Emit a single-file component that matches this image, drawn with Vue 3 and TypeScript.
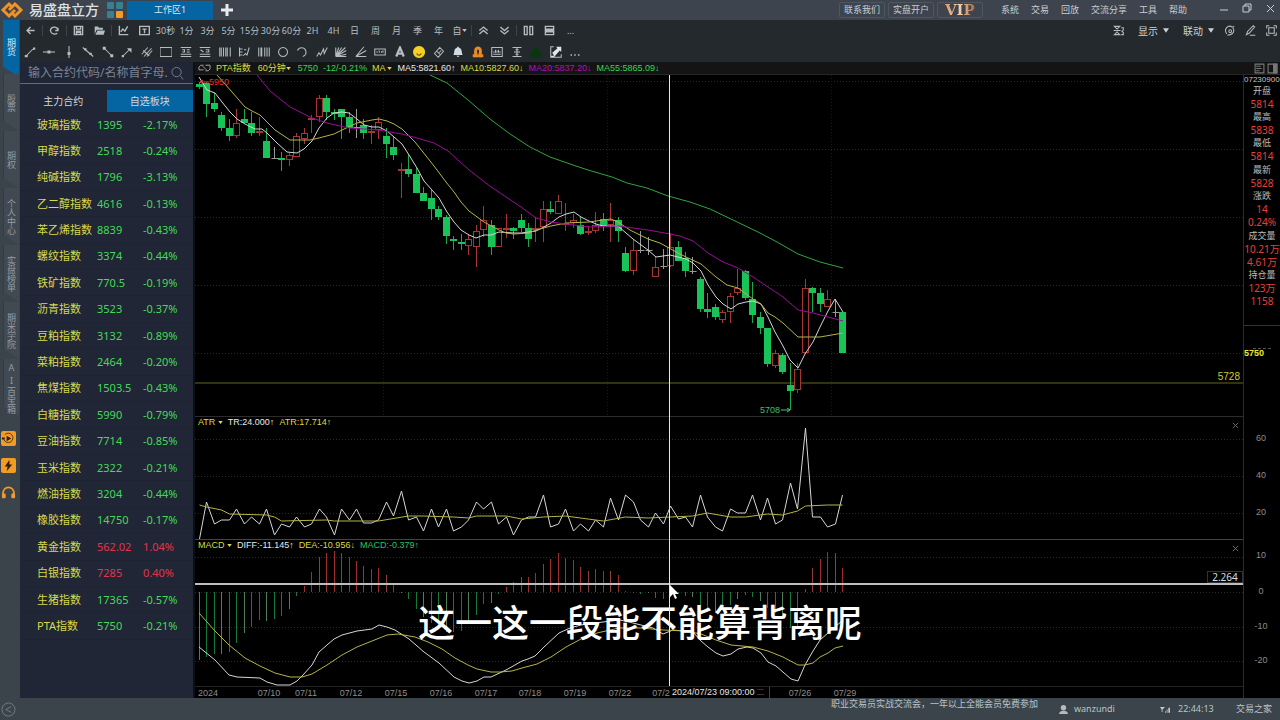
<script setup lang="ts">
import { ref } from 'vue'

type Kind = 'g' | 'r' | 'w'
interface Candle { kind: Kind; x: number; top: number; bottom: number; high: number; low: number }
interface Icon { name: string; d: string; fill?: string; tone?: string }
type Point = [number, number]

const STEP = 7.477
const slot = (i: number): number => Math.round(4 + STEP * i) + 0.5

/* candles: kind, body top, body bottom, wick top, wick bottom (three units to a pixel) */
const candleData = `g 72 80 66 88,g 70 131 66 170,g 130 147 98 155,g 164 203 155 212,g 204 228 178 243,r 188 228 147 235,g 178 188 148 190,g 188 219 155 228,r 213 218 172 228,g 244 293 203 293,w 294 294 262 294,g 294 300 277 333,r 286 300 278 318,r 229 292 220 292,r 220 236 204 252,r 173 179 165 219,r 115 170 106 185,g 115 155 105 180,g 156 163 148 180,g 147 170 147 236,g 171 204 155 220,w 200 200 147 235,g 196 219 178 236,r 212 218 195 252,r 187 210 172 236,g 228 251 204 293,g 262 285 228 300,r 327 332 310 415,g 327 342 285 350,g 342 398 325 398,g 399 422 380 422,g 415 446 390 479,g 447 470 438 480,g 472 527 465 552,g 537 544 528 570,g 546 553 522 570,r 536 559 522 586,r 512 560 495 620,r 481 511 438 530,g 495 560 480 586,r 505 560 505 560,r 504 510 462 535,g 505 512 500 537,g 480 503 462 515,g 504 536 490 562,r 504 510 472 545,r 448 500 424 545,g 447 455 422 462,r 424 462 405 463,r 490 496 430 513,r 480 488 462 505,g 495 522 472 526,r 513 518 498 526,r 495 512 455 520,g 477 498 460 512,r 480 495 430 546,g 480 512 470 545,g 579 632 560 635,r 570 632 538 644,w 570 570 513 580,w 570 570 530 586,r 620 652 587 652,w 619 619 568 628,r 560 618 520 620,g 561 602 542 602,g 594 632 577 650,w 634 634 592 643,g 658 748 652 755,g 748 755 699 773,g 741 772 732 780,r 757 781 750 788,r 709 755 700 788,r 685 699 627 706,g 633 714 630 720,g 717 764 667 788,g 772 805 757 822,g 805 911 803 920,r 878 917 870 925,g 885 936 880 943,g 975 992 910 1050,r 926 991 910 1000,r 685 879 658 882,g 684 699 682 757,g 699 731 684 755,r 717 740 690 742,w 757 757 720 772,g 757 879 755 880`
const priceY = (v: number): number => Math.round(v / 3) - 15
const candles: Candle[] = candleData.split(',').map((row, i) => {
  const [kind, ...n] = row.split(' ')
  const [top, bottom, high, low] = n.map(Number).map(priceY)
  return { kind: kind as Kind, x: slot(i), top, bottom, high, low }
})

const line = (src: string, ox: number, oy: number): string =>
  src.split(' ').map(p => p.split(',').map(Number) as Point).map(([x, y]) => `${x - ox},${y - oy}`).join(' ')

const averages = [
  { cls: 'ma5', pts: line('199,77 207,90 215,93 222,102 230,112 237,119 245,124 255,129 262,129 267,133 277,143 287,152 297,153 304,149 312,141 319,128 327,118 334,113 342,112 349,113 357,119 364,125 372,127 379,127 387,131 394,137 402,144 409,155 417,168 424,181 432,190 439,198 447,212 454,222 461,230 469,235 476,238 484,235 491,235 499,232 514,233 521,233 529,232 536,231 544,227 551,223 559,217 566,214 574,212 581,217 589,221 596,224 603,226 618,226 626,233 633,239 648,250 656,257 663,256 670,255 678,257 686,259 693,263 701,271 708,285 716,297 723,304 731,309 738,304 746,302 753,301 761,304 768,317 775,332 783,346 790,360 798,368 805,354 813,342 820,327 828,311 835,299 843,312', 195, 75) },
  { cls: 'ma10', pts: line('217,75 232,92 245,107 252,111 260,115 275,130 290,140 310,140 319,138 334,134 342,130 357,123 372,120 379,119 387,121 394,124 402,129 415,142 434,166 446,182 454,192 461,202 469,211 484,222 499,230 506,233 514,234 529,233 536,230 551,226 566,223 589,222 603,220 611,219 618,222 630,230 648,239 660,243 678,253 686,257 701,264 716,277 727,285 738,288 753,299 761,304 768,313 775,317 783,323 798,337 820,337 843,333', 195, 75) },
  { cls: 'ma20', pts: line('257,75 270,91 290,107 312,118 327,123 349,128 379,130 402,134 417,138 434,143 448,151 469,170 491,187 506,197 521,207 536,218 551,222 566,224 589,227 618,226 633,228 648,230 670,234 680,236 693,241 708,253 723,262 738,268 753,277 768,287 783,297 798,310 813,313 828,317 843,321', 195, 75) },
  { cls: 'ma55', pts: line('430,75 447,83 468,100 490,119 510,134 530,147 550,157 570,164 588,170 612,177 627,183 647,188 668,196 690,202 710,209 733,220 760,233 777,242 798,254 820,262 843,268', 195, 75) },
]

const series = (src: string, oy: number): string =>
  src.split(' ').map((v, i) => `${slot(i)},${Math.round(Number(v) / 3) + 410 - oy}`).join(' ')
const trueRange = series('387 275 341 329 329 298 341 320 341 298 374 341 352 320 352 342 298 320 374 298 329 298 340 340 330 276 319 242 330 320 363 298 352 298 363 352 330 275 297 275 341 320 374 329 320 320 254 352 342 298 364 342 364 330 352 265 330 254 275 330 352 309 341 288 328 320 352 254 320 352 364 298 308 308 254 330 265 341 330 220 297 54 320 320 352 342 254', 417)
const atr = '0,286 1,290 3,299 4,313 9,315 10,321 11,333 17,329 18,334 24,332 28,317 30,319 34,321 36,323 37,318 41,318 43,326 46,320 49,318 53,329 54,332 57,320 60,325 66,318 68,310 71,320 73,322 76,312 78,314 80,302 81,289 84,286 86,286'
  .split(' ').map(p => p.split(',').map(Number)).map(([i, v]) => `${slot(i)},${Math.round(v / 3) - 7}`).join(' ')

const ZERO = 52
const bars = '749 740 731 731 726 698 669 651 630 633 627 617 597 557 528 487 442 429 424 429 442 453 468 477 474 496 523 548 567 597 620 640 655 665 665 662 640 615 581 578 553 531 516 502 502 489 462 447 430 444 450 471 483 478 483 483 494 542 549 552 549 563 566 560 550 557 560 585 598 605 600 585 568 555 560 573 595 610 620 655 655 537 475 447 426 429 474'
  .split(' ').map((v, i) => ({ x: slot(i), y: Math.round(Number(v) / 3) - 130, tone: i % 3 }))

const thirds = (src: string): string =>
  src.split(' ').map(p => p.split(',').map(Number)).map(([x, y]) => `${Math.round(x / 3)},${Math.round(y / 3) - 130}`).join(' ')
const diff = thirds('13,712 60,750 103,795 127,800 195,805 217,817 245,826 285,826 305,812 325,795 350,765 373,725 395,705 418,687 440,675 485,662 530,656 553,645 575,650 600,660 643,688 687,725 732,760 777,802 800,814 822,819 845,812 867,800 889,802 934,780 980,752 1000,748 1020,738 1046,710 1091,668 1125,655 1159,645 1225,635 1275,630 1315,640 1375,655 1405,672 1435,660 1495,665 1517,693 1540,712 1562,728 1585,737 1607,732 1630,718 1655,711 1675,715 1697,728 1720,757 1742,767 1787,807 1810,812 1831,765 1853,722 1876,690 1898,668 1943,630')
const dea = thirds('13,610 60,662 103,705 150,745 195,768 240,788 285,800 320,800 350,792 395,766 440,735 485,710 530,692 575,676 610,671 660,680 700,697 740,717 780,743 820,766 845,778 889,785 915,787 950,783 980,775 1025,762 1068,740 1114,710 1159,688 1205,668 1271,655 1338,655 1405,660 1472,662 1517,672 1562,690 1607,706 1675,710 1720,722 1765,742 1810,766 1831,766 1853,758 1876,742 1898,728 1921,715 1943,707')

const dates = [['07/10', 74], ['07/11', 111], ['07/12', 156], ['07/15', 201], ['07/16', 246], ['07/17', 291], ['07/18', 335], ['07/19', 380], ['07/22', 425], ['07/2', 466], ['07/26', 605], ['07/29', 650]] as const
const scale = [['60', 112], ['40', 149], ['20', 186], ['10', 229], ['0', 265], ['-10', 300], ['-20', 334]] as const

const quotes: [string, boolean][] = [['开盘', false], ['5814', true], ['最高', false], ['5838', true], ['最低', false], ['5814', true], ['最新', false], ['5828', true], ['涨跌', false], ['14', true], ['0.24%', true], ['成交量', false], ['10.21万', true], ['4.61万', true], ['持仓量', false], ['123万', true], ['1158', true]]

const watch = ['玻璃指数 1395 -2.17%', '甲醇指数 2518 -0.24%', '纯碱指数 1796 -3.13%', '乙二醇指数 4616 -0.13%', '苯乙烯指数 8839 -0.43%', '螺纹指数 3374 -0.44%', '铁矿指数 770.5 -0.19%', '沥青指数 3523 -0.37%', '豆粕指数 3132 -0.89%', '菜粕指数 2464 -0.20%', '焦煤指数 1503.5 -0.43%', '白糖指数 5990 -0.79%', '豆油指数 7714 -0.85%', '玉米指数 2322 -0.21%', '燃油指数 3204 -0.44%', '橡胶指数 14750 -0.17%', '黄金指数 562.02 1.04%', '白银指数 7285 0.40%', '生猪指数 17365 -0.57%', 'PTA指数 5750 -0.21%'].map(s => s.split(' '))

const railTabs = ['期货', '股票', '期权', '个人中心', '实盘榜单', '期米学院', 'AI百宝箱']
const periods = ['30秒', '1分', '3分', '5分', '15分', '30分', '60分', '2H', '4H', '日', '周', '月', '季', '年', '自']
const menus = ['系统', '交易', '回放', '交流分享', '工具', '帮助']

const tools: Icon[] = [
  { name: '线段', d: 'M3 13L12 4', fill: 'M1 12h4v3H1zM12 2h3v3h-3z' },
  { name: '水平线', d: 'M0 8h16', fill: 'M6 6h4v4H6z' },
  { name: '垂直线', d: 'M8 0v16', fill: 'M6 8h4v4H6z' },
  { name: '直线', d: 'M1 2L15 14', fill: 'M3 3l3 0 0 3-3 0zM10 9h3v3h-3z' },
  { name: '下行线', d: 'M3 3L13 13', fill: 'M1 1h4v4H1zM11 11h4v4h-4z' },
  { name: '箭头线', d: 'M3 13L12 4', fill: 'M1 12h3v3H1zM8 3h6v6z' },
  { name: '平行线', d: 'M1 11L9 2M4 14L14 3M8 14l7-8M3 6l8 7' },
  { name: '矩形', d: 'M0 2h16v12H0z' },
  { name: '黄金分割', d: 'M1 2h14M1 14h14M1 11h14M3 5h3v3H3M9 5h4M9 8h4' },
  { name: '百分比线', d: 'M1 2h14M1 14h14M1 11h14M2 5l4 3M9 5h4v3H9' },
  { name: '周期线', d: 'M1 2v12M3 2v12M6 2v12M9 2v12M11 2v12M15 2v12' },
  { name: '波浪尺', d: 'M2 2v12M2 4h4M2 8h4M2 12h4M7 13l3-3 2 2 3-10M8 5h3' },
  { name: '时间尺', d: 'M1 2v12M4 2v12M5 2v12M9 2v12M12 2v12M15 2v12' },
  { name: '圆', d: 'M8 2a6 6 0 1 0 .1 0z' },
  { name: '弧线', d: 'M2 6c2-5 9-5 11 0 1 4-1 7-4 8' },
  { name: '折线', d: 'M1 14l3-5 2 3 4-8 1 6 4-8' },
  { name: '江恩线', d: 'M1 14V2M1 14L5 2M1 14L9 2M1 14L14 2M1 14L15 6M1 14l14-3M1 14h14' },
  { name: '扇形线', d: 'M1 14L12 1M1 14l14-8M1 14h14' },
  { name: '测量', d: 'M1 4h14v8H1zM4 9V7M7 9V6M10 9V7M12 9V6' },
  { name: '文字', d: 'M3 14L8 2l5 12M5 10h6', tone: 'bold' },
  { name: '表情', d: 'M5 10c1 3 5 3 6 0', fill: 'M8 0a8 8 0 1 0 .1 0zM5 5v2h1V5zM10 5v2h1V5z', tone: 'smile' },
  { name: '橡皮', d: 'M2 10L9 2l5 5-7 8zM5 7l5 5M8 9l3-3' },
  { name: '提醒', d: '', fill: 'M7 1h2v1c3 1 4 3 4 6l1 4H2l1-4c0-3 1-5 4-6zM6 13h4l-2 2z', tone: 'bell' },
  { name: '磁吸', d: 'M4 13h2c-6-14 10-14 4 0h2', fill: 'M1 11h5v4H1zM10 11h5v4h-5z', tone: 'magnet' },
  { name: '统计', d: 'M1 2h14v12H1zM3 11h10M4 9V7M6 9V5M8 9V6M10 9V5M12 9V7' },
  { name: '间距', d: 'M2 2h12M2 14h12M8 2v12M4 8h8M6 5h4M6 11h4' },
  { name: '云图', d: '', fill: 'M8 1a4 4 0 0 1 3 6 4 4 0 1 1-3 6 4 4 0 1 1-3-6 4 4 0 0 1 3-6z', tone: 'leaf' },
  { name: '全屏', d: 'M5 1H1v14h14v-4', fill: 'M8 1h7v7l-2-2-7 8-3-5 7-6zM1 13h5v2H1z', tone: 'white' },
  { name: '更多', d: '', fill: 'M2 11h2v2H2zM7 11h2v2H7zM12 11h2v2h-2z' },
]

const icons = {
  back: 'M8 3L3 8l5 5M3 8h11',
  redo: 'M13 4v4H9M13 8c-1-7-10-6-11 0 1 6 7 6 10 4',
  save: 'M2 2h12v12H2zM5 2v4h6V2M5 14V9h6v5M6 11h4',
  trend: 'M2 1v13h13M4 10l3-4 3 3 4-7',
  text: 'M1 2h14v12H1zM5 6h6M8 6v6',
  up: 'M2 8l6-5 6 5M2 13l6-5 6 5',
  down: 'M2 3l6 5 6-5M2 8l6 5 6-5',
  cols: 'M2 2h4v12H2zM10 2h4v12h-4z',
  rows: 'M2 2h12v4H2zM1 8h14M2 10h12v4H2z',
}
const query = ref('')
const activeRail = ref(0)
const activeList = ref(1)
</script>

<template>
  <div class="app">
    <header class="titlebar">
      <svg class="brand" viewBox="0 0 24 18"><path d="M12 6L9 3 3 9l6 6 6-6" /><path d="M12 12l3 3 6-6-6-6-6 6" /></svg>
      <strong class="name">易盛盘立方</strong>
      <svg class="tiles" viewBox="0 0 16 16"><rect width="7" height="7" rx="1" fill="#397f93" /><rect x="9" width="7" height="7" rx="1" fill="#397f93" /><rect y="9" width="7" height="7" rx="1" fill="#397f93" /><rect x="9" y="9" width="7" height="7" rx="1" fill="#f19b2b" /></svg>
      <button class="workspace">工作区1</button>
      <button class="plus" aria-label="新建工作区"><svg viewBox="0 0 12 12"><path d="M6 0v12M0 6h12" /></svg></button>
      <div class="promo">
        <button>联系我们</button><button>实盘开户</button><button class="vip"><span>VIP</span></button>
      </div>
      <nav class="menus"><a v-for="m in menus" :key="m" href="#">{{ m }}</a></nav>
      <div class="window">
        <button aria-label="最小化"><svg viewBox="0 0 10 10"><path d="M1 7h8" /></svg></button>
        <button aria-label="还原"><svg viewBox="0 0 10 10"><path d="M1 3h6v6H1zM3 3V1h6v6H7" /></svg></button>
        <button aria-label="关闭"><svg viewBox="0 0 10 10"><path d="M2 2l7 7M9 2L2 9" /></svg></button>
      </div>
    </header>

    <div class="body">
      <aside class="rail">
        <button v-for="(t, i) in railTabs" :key="t" :class="['rail-tab', { on: activeRail === i }]" @click="activeRail = i"><span>{{ t }}</span></button>
        <div class="rail-tools">
          <button class="tile" aria-label="直播"><svg viewBox="0 0 16 16"><path d="M3 9a5 5 0 1 0 1-5" fill="none" stroke="#493312" /><path d="M6 5l5 3-5 3zM1 7h3v2H1z" /></svg></button>
          <button class="tile" aria-label="快讯"><svg viewBox="0 0 16 16"><path d="M9 2L4 9h3l-1 5 6-7H9z" /></svg></button>
          <button class="phones" aria-label="客服"><svg viewBox="0 0 16 16"><path d="M2 10c0-10 12-10 12 0" fill="none" stroke="#f19b2b" stroke-width="2" /><rect x="1" y="9" width="4" height="5" rx="1" /><rect x="11" y="9" width="4" height="5" rx="1" /></svg></button>
        </div>
      </aside>

      <main class="main">
        <div class="bar">
          <button aria-label="返回"><svg class="ic" viewBox="0 0 16 16"><path :d="icons.back" /></svg></button><i />
          <button aria-label="刷新"><svg class="ic" viewBox="0 0 16 16"><path :d="icons.redo" /></svg></button><i />
          <button aria-label="保存"><svg class="ic" viewBox="0 0 16 16"><path :d="icons.save" /></svg></button>
          <button aria-label="打开"><svg class="ic" viewBox="0 0 16 16"><path class="solid" d="M1 2h5l1 2h6v3H4l-3 6zM5 8h11l-2 6H2z" /></svg></button><i />
          <button aria-label="走势"><svg class="ic" viewBox="0 0 16 16"><path :d="icons.trend" /></svg></button>
          <button aria-label="文本"><svg class="ic" viewBox="0 0 16 16"><path :d="icons.text" /></svg></button>
          <button v-for="p in periods" :key="p">{{ p }}<svg v-if="p === '自'" class="caret" viewBox="0 0 6 4"><path d="M0 0h6L3 4z" /></svg></button><i />
          <button aria-label="放大"><svg class="ic" viewBox="0 0 16 16"><path :d="icons.up" /></svg></button>
          <button aria-label="缩小"><svg class="ic" viewBox="0 0 16 16"><path :d="icons.down" /></svg></button><i />
          <button aria-label="竖排"><svg class="ic" viewBox="0 0 16 16"><path :d="icons.cols" /></svg></button>
          <button aria-label="横排"><svg class="ic" viewBox="0 0 16 16"><path :d="icons.rows" /></svg></button>
          <button>...</button>
          <div class="bar-right">
            <button aria-label="翻转"><svg class="ic" viewBox="0 0 16 16"><path d="M1 8h10M2 2l4 4 4-4zM6 10l-4 4h8zM12 4h3v3l-2 2 2 2v3h-3" /></svg></button>
            <button class="pick">显示<svg viewBox="0 0 8 6"><path d="M0 0h8L4 6z" /></svg></button>
            <button class="pick">联动<svg viewBox="0 0 8 6"><path d="M0 0h8L4 6z" /></svg></button>
            <button aria-label="同步"><svg class="ic" viewBox="0 0 16 16"><path d="M4 13C-1 6 6-1 12 3l3-1M13 4c3 5 0 9-4 10l-4 1" /><circle cx="9" cy="9" r="2" /></svg></button>
            <button aria-label="编辑"><svg class="ic" viewBox="0 0 16 16"><path d="M2 14l2-5 8-8 2 2-8 9zM7 15h8" /></svg></button>
            <button aria-label="全屏"><svg class="ic" viewBox="0 0 16 16"><path d="M1 5V1h4M11 1h4v4M15 11v4h-4M5 15H1v-4M4 4h8v8H4z" /></svg></button>
          </div>
        </div>
        <div class="tools">
          <button v-for="t in tools" :key="t.name" :aria-label="t.name"><svg :class="['ic', t.tone]" viewBox="0 0 16 16"><path v-if="t.fill" class="solid" :d="t.fill" /><path v-if="t.d" :d="t.d" /></svg></button>
        </div>

        <div class="content">
          <section class="watch">
            <label class="search">
              <input v-model="query" type="text" aria-label="搜索合约" placeholder="输入合约代码/名称首字母." />
              <svg viewBox="0 0 14 14"><circle cx="6" cy="6" r="5" /><path d="M10 10l3 4" /></svg>
            </label>
            <div class="tabs">
              <button v-for="(t, i) in ['主力合约', '自选板块']" :key="t" :class="{ on: activeList === i }" @click="activeList = i">{{ t }}</button>
            </div>
            <table>
              <tbody>
                <tr v-for="w in watch" :key="w[0]" :class="{ rise: !w[2].startsWith('-') }"><td>{{ w[0] }}</td><td>{{ w[1] }}</td><td>{{ w[2] }}</td></tr>
              </tbody>
            </table>
          </section>

          <section class="board">
            <div class="legend head">
              <svg class="link" viewBox="0 0 14 8"><path d="M6 6H1V3l2-2h3M8 1h5v4l-2 2H8M5 2l4 4" /></svg>
              <span class="y">PTA指数</span><span class="y period">60分钟<svg class="caret" viewBox="0 0 6 4"><path d="M0 0h6L3 4z" /></svg></span>
              <span class="gr">5750</span><span class="gr">-12/-0.21%</span>
              <span class="y">MA <svg class="caret" viewBox="0 0 6 4"><path d="M0 0h6L3 4z" /></svg></span>
              <span class="wh">MA5:5821.60↑</span><span class="y">MA10:5827.60↓</span><span class="pu">MA20:5837.20↓</span><span class="gr">MA55:5865.09↓</span>
              <div class="views">
                <button aria-label="列表"><svg viewBox="0 0 10 10"><path d="M1 1h8v8H1zM2 3h4M2 5h5M2 7h3" /></svg></button>
                <button aria-label="侧栏"><svg viewBox="0 0 10 10"><path d="M1 1h8v8H1z" /><path class="solid" d="M6 1h3v8H6z" /></svg></button>
              </div>
            </div>
            <div class="split">
              <div class="stage">
                <div class="pane price">
                  <svg class="plot">
                    <line v-for="y in [6, 74, 142, 210, 278]" :key="y" class="grid" x1="0" x2="100%" :y1="y + 0.5" :y2="y + 0.5" />
                    <line v-for="x in [188, 412, 636]" :key="x" class="grid faint" :x1="x + 0.5" :x2="x + 0.5" y1="0" y2="100%" />
                    <line class="level" x1="0" x2="100%" y1="308" y2="308" />
                    <g v-for="c in candles" :key="c.x" :class="['candle', c.kind]">
                      <template v-if="c.kind === 'r'">
                        <path :d="`M${c.x} ${c.high}V${c.top}M${c.x} ${c.bottom}V${c.low}`" />
                        <rect :x="c.x - 3" :y="c.top + 0.5" width="6" :height="Math.max(1, c.bottom - c.top - 1)" />
                      </template>
                      <template v-else>
                        <path :d="`M${c.x} ${c.high}V${c.low}`" />
                        <rect v-if="c.kind === 'g'" :x="c.x - 3.5" :y="c.top" width="7" :height="Math.max(2, c.bottom - c.top)" />
                        <path v-else :d="`M${c.x - 3} ${c.top + 0.5}h7`" />
                      </template>
                    </g>
                    <polyline v-for="a in averages" :key="a.cls" :class="['curve', a.cls]" :points="a.pts" />
                    <path class="hi" d="M14 7H5M8 5L5 7l3 2" /><text class="hi-t" x="14" y="10">5950</text>
                    <text class="lo-t" x="565" y="338">5708</text><path class="lo" d="M586 335h9M592 333l3 2-3 2" />
                    <text class="lv-t" x="100%" dx="-3" y="305">5728</text>
                  </svg>
                </div>
                <div class="pane atr">
                  <svg class="plot">
                    <line v-for="y in [22, 59, 96]" :key="y" class="grid" x1="0" x2="100%" :y1="y + 0.5" :y2="y + 0.5" />
                    <polyline class="curve ma5" :points="trueRange" /><polyline class="curve ma10" :points="atr" />
                  </svg>
                  <div class="legend over"><span class="y">ATR <svg class="caret" viewBox="0 0 6 4"><path d="M0 0h6L3 4z" /></svg></span><span class="wh">TR:24.000↑</span><span class="y">ATR:17.714↑</span></div>
                  <button class="close" aria-label="关闭ATR"><svg viewBox="0 0 8 8"><path d="M1 1l6 6M7 1L1 7" /></svg></button>
                </div>
                <div class="pane macd">
                  <svg class="plot">
                    <line v-for="y in [17, 52, 87, 121]" :key="y" class="grid" x1="0" x2="100%" :y1="y + 0.5" :y2="y + 0.5" />
                    <line v-for="b in bars" :key="b.x" :class="['bar-line', b.y < ZERO ? 'pos' : 'neg', 't' + b.tone]" :x1="b.x" :x2="b.x" :y1="ZERO" :y2="b.y" />
                    <polyline class="curve ma5" :points="diff" /><polyline class="curve ma10" :points="dea" />
                  </svg>
                  <div class="legend over"><span class="y">MACD <svg class="caret" viewBox="0 0 6 4"><path d="M0 0h6L3 4z" /></svg></span><span class="wh">DIFF:-11.145↑</span><span class="y">DEA:-10.956↓</span><span class="te">MACD:-0.379↑</span></div>
                  <button class="close" aria-label="关闭MACD"><svg viewBox="0 0 8 8"><path d="M1 1l6 6M7 1L1 7" /></svg></button>
                  <div class="cross-h"><span>2.264</span></div>
                  <p class="caption">这一这一段能不能算背离呢</p>
                </div>
                <div class="cross-v" />
                <svg class="cursor" viewBox="0 0 10 15"><path d="M1 0v12l3-3 2 5 2-1-2-4h4z" /></svg>
                <div class="axis">
                  <svg class="plot"><text x="3" y="9">2024</text><text v-for="d in dates" :key="d[0]" :x="d[1]" y="9" text-anchor="middle">{{ d[0] }}</text></svg>
                  <span class="stamp">2024/07/23 09:00:00<small>二</small></span>
                </div>
              </div>
              <aside class="quote">
                <div class="code">07230900</div>
                <div class="quote-list"><span v-for="(q, i) in quotes" :key="i" :class="{ red: q[1] }">{{ q[0] }}</span></div>
                <svg class="scale">
                  <line x1="9" x2="27" y1="22.5" y2="22.5" /><text class="now" x="0" y="30">5750</text>
                  <text v-for="s in scale" :key="s[0]" x="17" :y="s[1] + 3" text-anchor="middle">{{ s[0] }}</text>
                </svg>
              </aside>
            </div>
          </section>
        </div>
      </main>
    </div>

    <footer class="status">
      <button class="fold" aria-label="收起"><svg viewBox="0 0 16 16"><circle cx="8" cy="8" r="7" /><path d="M11 5L5 8l6 3" /></svg></button>
      <div class="news"><p>职业交易员实战交流会，一年以上全能会员免费参加</p></div>
      <svg class="user" viewBox="0 0 10 10"><circle cx="5" cy="3" r="3" /><path d="M0 10c0-5 10-5 10 0z" /></svg>
      <span class="login">wanzundi</span>
      <svg class="signal" viewBox="0 0 12 8"><path d="M0 1h6L3 4v3H2V4zM6 6h1v2H6zM8 4h1v4H8zM10 2h2v6h-2z" /></svg>
      <time>22:44:13</time>
      <a href="#">交易之家</a>
    </footer>
  </div>
</template>

<style>
body { background: #000; }
</style>

<style scoped>
.app { min-height: 100vh; display: flex; flex-direction: column; overflow: hidden; background: #000; color: #b9bfc4; font: 9px/12px "Noto Sans", "Noto Sans CJK SC", sans-serif; }
.app *, .app *::before { box-sizing: border-box; }
button { border: 0; padding: 0; margin: 0; background: none; color: inherit; font: inherit; display: flex; align-items: center; justify-content: center; white-space: nowrap; }
a { color: inherit; text-decoration: none; white-space: nowrap; }
svg { display: block; flex: none; fill: none; }
p { margin: 0; }

.titlebar { height: 20px; display: flex; align-items: center; background: #3d444d; color: #c9ced3; }
.brand { width: 24px; height: 18px; stroke: #ef9328; stroke-width: 3; }
.name { margin-left: 5px; width: 78px; color: #dde1e4; font-size: 14px; line-height: 20px; font-weight: 500; }
.tiles { width: 16px; height: 16px; }
.workspace { width: 86px; height: 19px; margin-left: 4px; background: #0565a2; color: #d9e7f2; }
.plus { width: 28px; height: 19px; }
.plus svg { width: 12px; height: 12px; stroke: #e8ebed; stroke-width: 3; }
.promo { margin-left: auto; display: flex; gap: 3px; }
.promo button { width: 46px; height: 16px; border: 1px solid #4d555e; border-radius: 2px; }
.promo .vip { font: bold 15px/14px "DejaVu Serif", serif; }
.vip span { background: linear-gradient(90deg, #d99a6c, #f3cfaa 50%, #a9683f); background-clip: text; -webkit-background-clip: text; color: transparent; }
.menus { display: flex; gap: 12px; margin-left: 18px; }
.window { display: flex; gap: 2px; margin-left: 26px; align-self: flex-start; }
.window button { width: 21px; height: 16px; }
.window svg { width: 10px; height: 10px; stroke: #c9ced3; stroke-width: 1; }

.body { flex: 1; display: flex; }
.rail { width: 20px; flex: none; background: #3b434b; color: #949ca3; }
.rail-tab { position: relative; width: 16px; height: 57px; margin-left: 3px; }
.rail-tab::before { content: ""; position: absolute; inset: 0; background: #414a52; border-left: 1px solid #343c43; clip-path: polygon(0 0, 100% 0, 100% 100%, 0 82%); }
.rail-tab.on { height: 54px; color: #dbe9f3; }
.rail-tab.on::before { background: #0565a2; border: 0; bottom: -3px; }
.rail-tab span { position: relative; writing-mode: vertical-rl; text-orientation: upright; font-size: 9px; line-height: 12px; }
.rail-tools { padding: 15px 0 0 1px; display: grid; gap: 12px; }
.rail-tools button { width: 15px; height: 15px; }
.rail-tools svg { width: 15px; height: 15px; fill: #2c2112; }
.tile { background: #f39c25; border-radius: 2px; }
.rail-tools .phones svg { fill: #f19b2b; }

.main { flex: 1; min-width: 0; display: flex; flex-direction: column; }
.bar { height: 21px; display: flex; align-items: center; background: #23292d; }
.bar > button { width: 21px; height: 20px; }
.bar > i { width: 1px; height: 11px; margin: 0 1px; background: #3d4449; }
.ic { width: 12px; height: 12px; stroke: #b6bcbf; stroke-width: 1.4; }
.bar .ic { width: 11px; height: 11px; stroke-width: 2; }
.ic .solid { fill: #b6bcbf; stroke: none; }
.caret { display: inline-block; width: 5px; height: 3px; fill: currentColor; vertical-align: middle; }
.bar-right { margin-left: auto; display: flex; align-items: center; gap: 10px; padding-right: 3px; }
.bar .bar-right .ic { stroke-width: 1.5; }
.pick { gap: 5px; margin-left: 4px; font-size: 10px; color: #c9d3d6; }
.pick svg { width: 6px; height: 5px; fill: #c9d3d6; }
.tools { height: 21px; display: grid; grid-template-columns: repeat(29, 1fr); padding-right: calc(100% - 565px); background: #23292d; }
.tools .bold { stroke-width: 3; }
.smile { stroke: #5b4b10; }
.smile .solid { fill: #f6cf25; }
.bell .solid { fill: #d0dce2; }
.tools .magnet { stroke: #e98b24; stroke-width: 4; }
.magnet .solid { fill: #e98b24; }
.leaf .solid { fill: #06370d; }
.white .solid { fill: #e4e8ea; }

.content { flex: 1; display: flex; background: #000; }
.watch { width: 175px; flex: none; background: #202635; border-right: 2px solid #0b0f18; }
.search { display: flex; align-items: center; height: 22px; border-bottom: 1px solid #656b76; padding: 0 9px 0 8px; }
.search input { flex: 1; min-width: 0; padding: 0; border: 0; outline: 0; background: none; color: #c0c6ce; font: 12px/18px "Noto Sans", "Noto Sans CJK SC", sans-serif; }
.search input::placeholder { color: #7c8390; opacity: 1; }
.search svg { width: 13px; height: 14px; stroke: #78808c; }
.tabs { display: grid; grid-template-columns: 1fr 1fr; padding-top: 6px; }
.tabs button { height: 22px; font-size: 10px; color: #d3d6db; }
.tabs .on { background: #0565a2; }
.watch table { width: 100%; height: 528px; border-collapse: collapse; color: #44da58; font-size: 11px; line-height: 14px; table-layout: fixed; }
.watch td { padding: 0; border-bottom: 1px solid #1d2331; white-space: nowrap; }
.watch td:nth-child(1) { width: 77px; padding-left: 17px; color: #d8d94e; }
.watch td:nth-child(2) { width: 46px; }
.rise td:nth-child(n + 2) { color: #e0354c; }

.board { flex: 1; min-width: 0; display: flex; flex-direction: column; font-family: "Liberation Sans", "Noto Sans CJK SC", sans-serif; }
.legend { display: flex; align-items: center; gap: 5px; white-space: nowrap; font-size: 9px; line-height: 12px; }
.head { height: 13px; padding-left: 3px; background: #141414; border-bottom: 1px solid #262626; }
.link { width: 13px; height: 8px; stroke: #a9a9a9; }
.period { margin: 0 2px; }
.y { color: #dcdc3c; } .gr { color: #32d850; } .wh { color: #e8e8e8; } .pu { color: #b80db8; } .te { color: #24c46a; }
.views { margin-left: auto; display: flex; gap: 2px; padding-right: 2px; }
.views svg { width: 11px; height: 11px; stroke: #777; }
.views .solid { fill: #777; }
.split { flex: 1; display: flex; }
.stage { position: relative; flex: 1; min-width: 0; display: flex; flex-direction: column; }
.pane { position: relative; border-bottom: 1px solid #2c2c2c; }
.price { flex: 1 0 342px; }
.atr { height: 123px; border-color: #444; }
.macd { height: 146px; border: 0; }
.plot { width: 100%; height: 100%; position: absolute; inset: 0; }
.grid { stroke: #2a2a2a; stroke-dasharray: 1 2; }
.faint { stroke: #181818; }
.level { stroke: #66661d; stroke-width: 1; }
.candle { stroke-width: 1; }
.g { stroke: #18a94c; } .g rect { fill: #18c458; stroke: none; }
.r { stroke: #a83434; } .r rect { fill: #000; }
.w { stroke: #999; }
.curve { stroke-width: 1; stroke-linejoin: round; }
.ma5 { stroke: #d6d6d6; } .ma10 { stroke: #b5b548; } .ma20 { stroke: #990c99; } .ma55 { stroke: #2fa63c; }
.hi { stroke: #e33; } .lo { stroke: #45c585; }
.plot text { font: 9px "Liberation Sans", sans-serif; }
.plot .hi-t { fill: #e22f2f; } .plot .lo-t { fill: #31c36a; }
.plot .lv-t { fill: #cccc3a; text-anchor: end; font-size: 10px; }
.over { position: absolute; left: 3px; top: -1px; }
.close { position: absolute; right: 4px; top: 4px; width: 8px; height: 8px; }
.close svg { width: 7px; height: 7px; stroke: #777; }
.pos { stroke: #a02c2c; } .pos.t1 { stroke: #8e3e3a; } .neg { stroke: #137a3c; } .neg.t0 { stroke: #4d8059; }
.cross-h { position: absolute; left: 0; right: 0; top: 31px; height: 14px; border-bottom: 2px solid #bdbdbd; display: flex; justify-content: flex-end; }
.cross-h span { width: 36px; border: 1px solid #333; background: #000; color: #ddd; font: 10px/11px "Noto Sans", sans-serif; text-align: center; }
.cross-v { position: absolute; left: 474px; top: 0; bottom: 12px; width: 1px; background: #e6e6e6; }
.cursor { position: absolute; left: 474px; bottom: 98px; width: 10px; height: 15px; fill: #fff; }
.caption { position: absolute; left: 223px; top: 54px; color: #fff; font: 500 37px/54px "Noto Sans CJK SC", sans-serif; white-space: nowrap; }
.axis { position: relative; height: 12px; border-top: 1px solid #222; }
.axis text { fill: #8d8d8d; }
.stamp { position: absolute; left: 475px; top: 0; width: 100px; height: 11px; padding-left: 2px; border-right: 1px solid #444; background: #000; color: #e6e6e6; line-height: 11px; white-space: nowrap; }
.stamp small { font-size: 8px; color: #444; margin-left: 2px; }
.quote { width: 37px; flex: none; border-left: 1px solid #2c2c2c; display: flex; flex-direction: column; overflow: hidden; }
.code { height: 9px; font-size: 8px; line-height: 9px; color: #c4c4c4; }
.quote-list { height: 242px; padding: 0 0 17px; display: grid; grid-auto-rows: 1fr; align-items: center; justify-items: center; border-bottom: 1px solid #333; font-size: 9px; line-height: 12px; color: #bdbdbd; white-space: nowrap; }
.quote-list .red { color: #e5403f; font-size: 10px; font-family: "Noto Sans", "Noto Sans CJK SC", sans-serif; }
.scale { flex: 1; width: 100%; }
.scale line { stroke: #555; stroke-dasharray: 3 2; }
.scale text { fill: #8d8d8d; font-size: 9px; }
.scale .now { fill: #eaea33; font-weight: bold; }

.status { height: 22px; display: flex; align-items: center; background: #3b434b; color: #bcc3c8; padding: 0 8px 0 1px; }
.fold svg { width: 15px; height: 15px; stroke: #747d84; }
.news { margin-left: auto; align-self: flex-start; width: 208px; white-space: nowrap; }
.user { width: 9px; height: 9px; margin-left: 20px; fill: #b5bbc0; }
.login { margin-left: 6px; width: 86px; }
.signal { width: 10px; height: 7px; fill: #c4cace; }
.status time { margin-left: 8px; width: 58px; }
</style>
